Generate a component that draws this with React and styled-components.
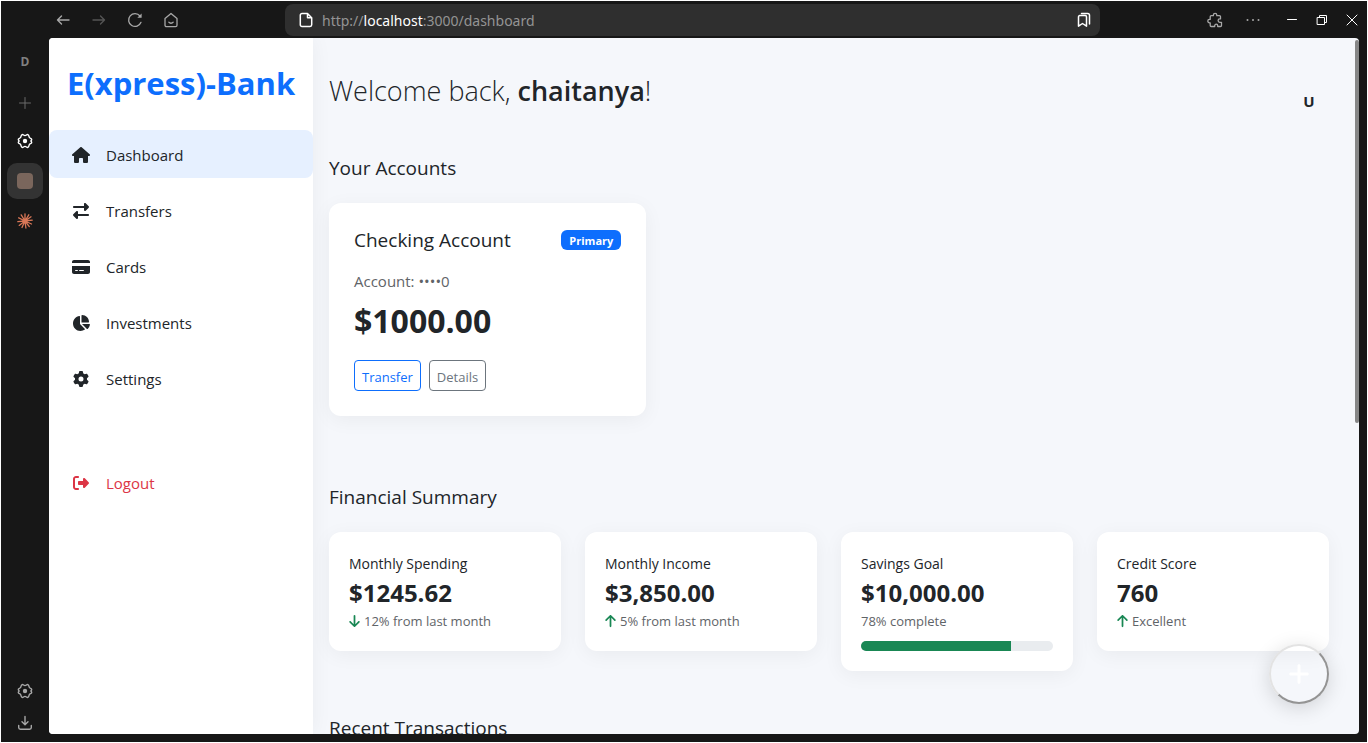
import React from "react";
import styled, { createGlobalStyle, css } from "styled-components";
import {
  FaHouse,
  FaRightLeft,
  FaCreditCard,
  FaChartPie,
  FaGear,
  FaRightFromBracket,
  FaArrowDown,
  FaArrowUp,
  FaPlus,
} from "react-icons/fa6";

const GlobalStyle = createGlobalStyle`
  *, *::before, *::after { box-sizing: border-box; }
  body {
    margin: 0;
    background: #171717;
    color: #212529;
    font-family: "Open Sans", "Noto Sans", sans-serif;
    font-size: 15px;
    line-height: 24px;
  }
  h1, h2, h3, p, ul { margin: 0; padding: 0; font-weight: 400; }
  ul { list-style: none; }
  a { color: inherit; text-decoration: none; }
  button { font: inherit; color: inherit; background: none; border: 0; padding: 0; cursor: pointer; }
`;

/* ---------- browser frame ---------- */

const Browser = styled.div`
  display: flex;
  flex-direction: column;
  height: 100vh;
  border: 1px solid #fff;
  background: #171717;
  overflow: hidden;
`;

const Toolbar = styled.header`
  display: flex;
  align-items: center;
  flex: none;
  height: 37px;
`;

const NavButtons = styled.div`
  display: flex;
  width: 284px;
  padding-left: 44px;
`;

const ToolButton = styled.button`
  display: flex;
  align-items: center;
  justify-content: center;
  width: ${(p) => p.$width || 36}px;
  height: 32px;
  color: ${(p) => p.$color || "#a8a8a8"};
`;

const AddressBar = styled.button`
  display: flex;
  align-items: center;
  flex: 1;
  gap: 8px;
  height: 32px;
  padding: 0 8px 0 13px;
  border-radius: 8px;
  background: #2f2f2f;
  color: #fff;
  font-family: "Noto Sans", sans-serif;
`;

const Url = styled.span`
  flex: 1;
  padding-top: 2px;
  text-align: left;
  font-size: 14px;
  line-height: 20px;
  color: #949494;
`;

const Host = styled.span`
  color: #fff;
`;

const WindowArea = styled.div`
  display: flex;
  justify-content: flex-end;
  gap: 5px;
  width: 267px;
`;

const ButtonGroup = styled.div`
  display: flex;
`;

const Body = styled.div`
  display: flex;
  flex: 1;
  min-height: 0;
  padding: 0 8px 8px 0;
`;

const Rail = styled.aside`
  display: flex;
  flex-direction: column;
  align-items: center;
  flex: none;
  width: 48px;
  margin-bottom: -8px;
  padding-bottom: 3px;
`;

const Workspace = styled.div`
  display: flex;
  align-items: center;
  height: 46px;
  padding-top: 2px;
  color: #808080;
  font-size: 12px;
  font-weight: 700;
`;

const TabList = styled.div`
  display: flex;
  flex-direction: column;
  gap: 4px;
  flex: 1;
  padding-top: 1px;
`;

const RailButton = styled.button`
  display: flex;
  align-items: center;
  justify-content: center;
  width: 36px;
  height: ${(p) => p.$height || 36}px;
  border-radius: 10px;
  color: ${(p) => p.$color || "#a8a8a8"};
  background: ${(p) => (p.$active ? "#333" : "none")};
`;

const Favicon = styled.span`
  width: 16px;
  height: 16px;
  border-radius: 4px;
  background: #7a665c;
`;

/* ---------- bank page ---------- */

const Page = styled.div`
  position: relative;
  display: flex;
  flex: 1;
  min-width: 0;
  border-radius: 4px;
  background: #f5f7fb;
  overflow: hidden;
`;

const ScrollThumb = styled.div`
  position: absolute;
  top: 2px;
  right: 0;
  width: 4px;
  height: 55%;
  border-radius: 2px;
  background: #868686;
`;

const Sidebar = styled.nav`
  flex: none;
  width: 264px;
  background: #fff;
  box-shadow: 0 0 20px rgba(0, 0, 0, 0.05);
`;

const Brand = styled.a`
  display: flex;
  align-items: center;
  justify-content: center;
  height: 92px;
  padding-bottom: 2px;
  color: #0d6efd;
  font-size: 31px;
  font-weight: 700;
  white-space: nowrap;
`;

const Menu = styled.ul`
  display: flex;
  flex-direction: column;
  gap: 8px;
`;

const MenuItem = styled.li`
  padding-top: ${(p) => (p.$apart ? 48 : 0)}px;
`;

const MenuLink = styled.a`
  display: flex;
  align-items: center;
  gap: 13px;
  height: 48px;
  padding: 2px 20px 0;
  border-radius: 8px;
  background: ${(p) => (p.$active ? "#e6f0ff" : "none")};
  color: ${(p) => (p.$danger ? "#dc3545" : "#212529")};
`;

const MenuIcon = styled.span`
  display: flex;
  justify-content: center;
  width: 24px;

  svg {
    flex: none;
    width: ${(p) => (p.$wide ? 18 : 16)}px;
    height: ${(p) => (p.$wide ? 18 : 16)}px;
  }
`;

const Main = styled.main`
  flex: 1;
  min-width: 0;
  height: 100%;
  padding: 0 30px 0 16px;
  overflow: hidden;
`;

const Welcome = styled.header`
  display: flex;
  justify-content: space-between;
  align-items: flex-start;
  height: 118px;
  padding-top: 33px;
`;

const Greeting = styled.h1`
  font-size: 27px;
  font-weight: 300;
  line-height: 40px;
`;

const UserName = styled.strong`
  font-weight: 600;
`;

const Avatar = styled.button`
  width: 40px;
  height: 40px;
  padding-top: 18px;
  font-weight: 700;
`;

const Section = styled.section`
  margin-bottom: ${(p) => p.$space}px;
`;

const SectionTitle = styled.h2`
  margin-bottom: 23px;
  font-size: 19px;
  line-height: 24px;
`;

const AccountGrid = styled.div`
  display: grid;
  grid-template-columns: repeat(3, 1fr);
  gap: 24px;
`;

const SummaryGrid = styled.div`
  display: grid;
  grid-template-columns: repeat(4, 1fr);
  align-items: start;
  gap: 24px;
`;

const card = css`
  border-radius: 12px;
  background: #fff;
  box-shadow: 0 4px 20px rgba(0, 0, 0, 0.05);
`;

const AccountCard = styled.article`
  ${card}
  padding: 25px;
`;

const AccountHead = styled.div`
  display: flex;
  justify-content: space-between;
  align-items: center;
  height: 24px;
`;

const AccountName = styled.h3`
  font-size: 19px;
  line-height: 24px;
`;

const Badge = styled.span`
  padding: 1px 8px 0;
  border-radius: 6px;
  background: #0d6efd;
  color: #fff;
  font-size: 11px;
  font-weight: 700;
  line-height: 19px;
`;

const AccountNumber = styled.p`
  margin-top: 17px;
  color: #5f6468;
`;

const Balance = styled.p`
  margin-top: 8px;
  font-size: 32px;
  font-weight: 700;
  line-height: 40px;
`;

const Actions = styled.div`
  display: flex;
  gap: 8px;
  margin-top: 19px;
`;

const OutlineButton = styled.button`
  height: 31px;
  padding: 2px 7px 0;
  border: 1px solid ${(p) => p.$color};
  border-radius: 4px;
  color: ${(p) => p.$color};
  font-size: 13px;
  line-height: 20px;
`;

const SummaryCard = styled.article`
  ${card}
  padding: 20px;
`;

const SummaryTitle = styled.h3`
  font-size: 14px;
  line-height: 24px;
`;

const SummaryValue = styled.p`
  font-size: 24px;
  font-weight: 700;
  line-height: 34px;
`;

const SummaryNote = styled.p`
  display: flex;
  align-items: center;
  gap: 4px;
  margin-top: 1px;
  color: #5f6468;
  font-size: 13px;
  line-height: 20px;

  svg {
    width: 11px;
    height: 14px;
    color: #198754;
  }
`;

const Progress = styled.div`
  height: 10px;
  margin-top: 10px;
  border-radius: 6px;
  background: #e9ecef;
  overflow: hidden;
`;

const ProgressFill = styled.div`
  height: 100%;
  background: #198754;
`;

const AddButton = styled.button`
  position: absolute;
  right: 30px;
  bottom: 30px;
  display: flex;
  align-items: center;
  justify-content: center;
  width: 60px;
  height: 60px;
  border: 2px solid;
  border-color: #e3e3e3 #949494 #949494 #e3e3e3;
  border-radius: 50%;
  color: #fff;
  font-size: 24px;
  box-shadow: 0 4px 20px rgba(0, 0, 0, 0.15);
`;

/* ---------- frame icons ---------- */

const Glyph = ({ children, size = 16, width = 1.2 }) => (
  <svg
    width={size}
    height={size}
    viewBox="0 0 16 16"
    fill="none"
    stroke="currentColor"
    strokeWidth={width}
    strokeLinecap="round"
    strokeLinejoin="round"
    aria-hidden="true"
  >
    {children}
  </svg>
);

const BackIcon = () => (
  <Glyph width={1.4}><path d="M14 8H2.500M6.500 4l-4 4 4 4" /></Glyph>
);
const ForwardIcon = () => (
  <Glyph width={1.4}><path d="M2 8h11.500M9.500 4l4 4-4 4" /></Glyph>
);
const ReloadIcon = () => (
  <Glyph width={1.3}>
    <path d="M14 10.300A6.400 6.400 0 1 1 13 4" />
    <path d="M14.600 1.500v4.300h-4.300z" fill="currentColor" stroke="none" />
  </Glyph>
);
const HomeIcon = () => (
  <Glyph width={1.3}>
    <path d="M2 6.400 8 1.500l6 4.900v6.800a1.400 1.400 0 0 1-1.400 1.400H3.400A1.400 1.400 0 0 1 2 13.200zM5.800 10.200c1.100 1.400 3.300 1.400 4.400 0" />
  </Glyph>
);
const FileIcon = () => (
  <Glyph width={1.5}>
    <path d="M9.500 1.500H4A1.700 1.700 0 0 0 2.300 3.200v9.600A1.700 1.700 0 0 0 4 14.500h8a1.700 1.700 0 0 0 1.700-1.700V5.700zM9.500 1.500v4.200h4.200" />
  </Glyph>
);
const BookmarkIcon = () => (
  <Glyph width={1.5}>
    <path d="M2.500 4.800c0-.7.500-1.200 1.200-1.200h5.600c.7 0 1.200.5 1.200 1.200v9.400l-4-2.700-4 2.700zM5.500 1.500h6.200a1.800 1.800 0 0 1 1.800 1.800v8.700" />
  </Glyph>
);
const PuzzleIcon = () => (
  <Glyph width={1.3}>
    <path d="M4.200 3.700h2.200V3a1.700 1.700 0 0 1 3.400 0v.7h2.700a1 1 0 0 1 1 1v2.200h-.7a1.700 1.700 0 0 0 0 3.400h1.700v3.200a1 1 0 0 1-1 1h-2.800v-.8a1.500 1.500 0 0 0-3 0v.8H4.200a1 1 0 0 1-1-1v-2.700h-.7a1.700 1.700 0 0 1 0-3.400h.7V4.700a1 1 0 0 1 1-1z" />
  </Glyph>
);
const DotsIcon = () => (
  <Glyph>
    <g fill="currentColor" stroke="none">
      <circle cx="2.500" cy="8" r="1" />
      <circle cx="8" cy="8" r="1" />
      <circle cx="13.500" cy="8" r="1" />
    </g>
  </Glyph>
);
const MinimizeIcon = () => (
  <Glyph width={1}><path d="M3.500 7.500h9" /></Glyph>
);
const RestoreIcon = () => (
  <Glyph width={1}><path d="M3.500 5.500h7v7h-7zM5.500 5.500v-2h7v7h-2" /></Glyph>
);
const CloseIcon = () => (
  <Glyph width={1}><path d="M3 3l10 10M13 3 3 13" /></Glyph>
);
const PlusIcon = () => (
  <Glyph width={1}><path d="M8 2.500v11M2.500 8h11" /></Glyph>
);
const HexGearIcon = () => (
  <Glyph width={1.4}>
    <path d="M5.200 1.600C6.200 1.200 6.700 2.600 8 2.600s1.800-1.400 2.800-1c1.400.6 1 1.900 1.600 2.900.6 1 2.300.9 2.300 2.100 0 .7-.8.900-.8 1.400s.8.700.8 1.400c0 1.200-1.700 1.100-2.300 2.100-.6 1-.2 2.300-1.600 2.900-1 .4-1.500-1-2.800-1s-1.800 1.400-2.800 1c-1.400-.6-1-1.900-1.600-2.900-.6-1-2.300-.9-2.300-2.100 0-.7.8-.9.8-1.400s-.8-.7-.8-1.400c0-1.200 1.700-1.100 2.300-2.100.6-1 .2-2.300 1.600-2.900z" />
    <circle cx="8" cy="8" r="2.200" fill="currentColor" stroke="none" />
  </Glyph>
);
const BurstIcon = () => (
  <Glyph width={1.3}>
    <path d="M8 8V.800M8 8l3.800-6.200M8 8l6-4.200M8 8l7.200-.8M8 8l6.500 3M8 8l4.300 5.600M8 8l.9 7M8 8l-3 6.500M8 8l-5.800 4.400M8 8l-7.200.6M8 8 1.700 4.800M8 8 4.200 1.900" />
  </Glyph>
);
const DownloadIcon = () => (
  <Glyph width={1.4}>
    <path d="M8 1.500v8M5 6.800l3 3 3-3M1.700 10.500v2a1.700 1.700 0 0 0 1.700 1.700h9.200a1.700 1.700 0 0 0 1.700-1.700v-2" />
  </Glyph>
);

/* ---------- data ---------- */

const menu = [
  { label: "Dashboard", Icon: FaHouse, active: true, wide: true },
  { label: "Transfers", Icon: FaRightLeft },
  { label: "Cards", Icon: FaCreditCard, wide: true },
  { label: "Investments", Icon: FaChartPie, wide: true },
  { label: "Settings", Icon: FaGear },
  { label: "Logout", Icon: FaRightFromBracket, danger: true },
];

const summary = [
  { title: "Monthly Spending", value: "$1245.62", note: "12% from last month", Icon: FaArrowDown },
  { title: "Monthly Income", value: "$3,850.00", note: "5% from last month", Icon: FaArrowUp },
  { title: "Savings Goal", value: "$10,000.00", note: "78% complete", progress: 78 },
  { title: "Credit Score", value: "760", note: "Excellent", Icon: FaArrowUp },
];

export default function App() {
  return (
    <Browser>
      <GlobalStyle />
      <Toolbar>
        <NavButtons>
          <ToolButton aria-label="Back"><BackIcon /></ToolButton>
          <ToolButton aria-label="Forward" $color="#555"><ForwardIcon /></ToolButton>
          <ToolButton aria-label="Reload"><ReloadIcon /></ToolButton>
          <ToolButton aria-label="Home"><HomeIcon /></ToolButton>
        </NavButtons>
        <AddressBar>
          <FileIcon />
          <Url>http://<Host>localhost</Host>:3000/dashboard</Url>
          <BookmarkIcon />
        </AddressBar>
        <WindowArea>
          <ButtonGroup>
            <ToolButton aria-label="Extensions" $width={38}><PuzzleIcon /></ToolButton>
            <ToolButton aria-label="More" $width={38}><DotsIcon /></ToolButton>
          </ButtonGroup>
          <ButtonGroup>
            <ToolButton aria-label="Minimize" $width={30} $color="#fff"><MinimizeIcon /></ToolButton>
            <ToolButton aria-label="Restore" $width={30} $color="#fff"><RestoreIcon /></ToolButton>
            <ToolButton aria-label="Close" $width={30} $color="#fff"><CloseIcon /></ToolButton>
          </ButtonGroup>
        </WindowArea>
      </Toolbar>

      <Body>
        <Rail>
          <Workspace>D</Workspace>
          <RailButton aria-label="New tab" $height={38} $color="#6a6a6a"><PlusIcon /></RailButton>
          <TabList>
            <RailButton aria-label="Settings tab" $color="#fff"><HexGearIcon /></RailButton>
            <RailButton aria-label="Bank tab" $active><Favicon /></RailButton>
            <RailButton aria-label="Assistant tab" $color="#d97757"><BurstIcon /></RailButton>
          </TabList>
          <RailButton aria-label="Browser settings" $height={32}><HexGearIcon /></RailButton>
          <RailButton aria-label="Downloads" $height={32}><DownloadIcon /></RailButton>
        </Rail>

        <Page>
          <Sidebar>
            <Brand href="#home">E(xpress)-Bank</Brand>
            <Menu>
              {menu.map(({ label, Icon, active, danger, wide }) => (
                <MenuItem key={label} $apart={danger}>
                  <MenuLink href={`#${label.toLowerCase()}`} $active={active} $danger={danger}>
                    <MenuIcon $wide={wide}><Icon /></MenuIcon>
                    {label}
                  </MenuLink>
                </MenuItem>
              ))}
            </Menu>
          </Sidebar>

          <Main>
            <Welcome>
              <Greeting>
                Welcome back, <UserName>chaitanya</UserName>!
              </Greeting>
              <Avatar>U</Avatar>
            </Welcome>

            <Section $space={69}>
              <SectionTitle>Your Accounts</SectionTitle>
              <AccountGrid>
                <AccountCard>
                  <AccountHead>
                    <AccountName>Checking Account</AccountName>
                    <Badge>Primary</Badge>
                  </AccountHead>
                  <AccountNumber>Account: ••••0</AccountNumber>
                  <Balance>$1000.00</Balance>
                  <Actions>
                    <OutlineButton $color="#0d6efd">Transfer</OutlineButton>
                    <OutlineButton $color="#6c757d">Details</OutlineButton>
                  </Actions>
                </AccountCard>
              </AccountGrid>
            </Section>

            <Section $space={45}>
              <SectionTitle>Financial Summary</SectionTitle>
              <SummaryGrid>
                {summary.map(({ title, value, note, Icon, progress }) => (
                  <SummaryCard key={title}>
                    <SummaryTitle>{title}</SummaryTitle>
                    <SummaryValue>{value}</SummaryValue>
                    <SummaryNote>
                      {Icon && <Icon />}
                      {note}
                    </SummaryNote>
                    {progress && (
                      <Progress role="progressbar" aria-label={title} aria-valuenow={progress}>
                        <ProgressFill style={{ width: `${progress}%` }} />
                      </Progress>
                    )}
                  </SummaryCard>
                ))}
              </SummaryGrid>
            </Section>

            <Section $space={0}>
              <SectionTitle>Recent Transactions</SectionTitle>
            </Section>
          </Main>

          <AddButton aria-label="Add"><FaPlus /></AddButton>
          <ScrollThumb />
        </Page>
      </Body>
    </Browser>
  );
}
